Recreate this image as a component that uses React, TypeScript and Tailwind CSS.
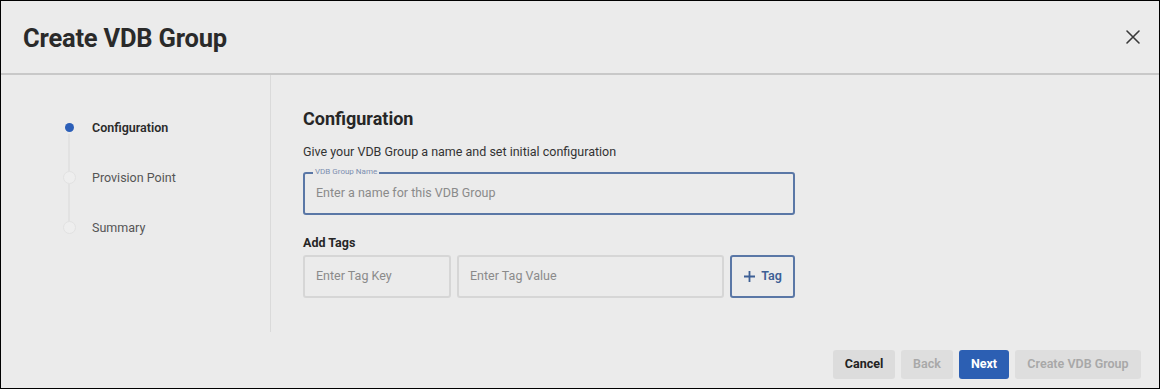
import React from "react";

function XIcon() {
  return (
    <svg width="16" height="16" viewBox="0 0 16 16" fill="none">
      <path d="M2 2L14 14M14 2L2 14" stroke="#3a3a3a" strokeWidth="1.6" strokeLinecap="round" />
    </svg>
  );
}

function Step({ label, active, last }: { label: string; active?: boolean; last?: boolean }) {
  return (
    <div className="relative flex h-[50px] items-start">
      <div className="relative flex w-[40px] justify-center">
        {active ? (
          <div className="mt-[3px] h-[9px] w-[9px] rounded-full bg-[#2c5fb8]" />
        ) : (
          <div className="mt-[1px] h-[13px] w-[13px] rounded-full border border-[#e2e2e2] bg-[#eeeeee]" />
        )}
        {!last && <div className="absolute left-1/2 top-[14px] h-[38px] w-px -translate-x-1/2 bg-[#dadada]" />}
      </div>
      <span
        className={
          "ml-[3px] text-[12.5px] leading-[15px] " +
          (active ? "font-semibold text-[#2a2a2a]" : "text-[#555555]")
        }
      >
        {label}
      </span>
    </div>
  );
}

export default function App() {
  return (
    <div className="flex h-[389px] w-[1160px] flex-col border border-black bg-[#ebebeb] font-['Roboto',sans-serif]">
      <div className="flex h-[74px] items-center justify-between border-b-2 border-[#c8c8c8] pl-[22px] pr-[18px]">
        <h1 className="pt-[2px] text-[25.5px] font-bold tracking-[-0.2px] text-[#2a2a2a]">Create VDB Group</h1>
        <XIcon />
      </div>
      <div className="flex h-[257px]">
        <div className="w-[270px] border-r border-[#dadada] pl-[48px] pt-[45px]">
          <Step label="Configuration" active />
          <Step label="Provision Point" />
          <Step label="Summary" last />
        </div>
        <div className="flex-1 pl-[32px] pt-[33px]">
          <h2 className="text-[18px] font-bold leading-[22px] text-[#262626]">Configuration</h2>
          <p className="mt-[14px] text-[12.5px] leading-[15px] text-[#333333]">
            Give your VDB Group a name and set initial configuration
          </p>
          <div className="relative mt-[13px] flex h-[43px] w-[492px] items-center rounded-[3px] border-2 border-[#5a77a6] pl-[11px]">
            <span className="absolute -top-[7px] left-[8px] bg-[#ebebeb] px-[2px] text-[8px] leading-[10px] text-[#7d8fb0]">
              VDB Group Name
            </span>
            <span className="text-[12.5px] text-[#8a8a8a]">Enter a name for this VDB Group</span>
          </div>
          <div className="mt-[20px] text-[12.5px] font-bold leading-[15px] text-[#262626]">Add Tags</div>
          <div className="mt-[5px] flex gap-[6px]">
            <div className="flex h-[43px] w-[148px] items-center rounded-[3px] border-2 border-[#d6d6d6] pl-[11px] text-[12.5px] text-[#8a8a8a]">
              Enter Tag Key
            </div>
            <div className="flex h-[43px] w-[267px] items-center rounded-[3px] border-2 border-[#d6d6d6] pl-[11px] text-[12.5px] text-[#8a8a8a]">
              Enter Tag Value
            </div>
            <div className="flex h-[43px] w-[65px] items-center justify-center gap-[5px] rounded-[3px] border-2 border-[#5a77a6] text-[12.5px] font-semibold text-[#3d5f95]">
              <svg width="13" height="13" viewBox="0 0 13 13">
                <path d="M6.5 1V12M1 6.5H12" stroke="#3d5f95" strokeWidth="1.8" />
              </svg>
              Tag
            </div>
          </div>
        </div>
      </div>
      <div className="flex flex-1 items-start justify-end gap-[6px] pr-[18px] pt-[18px]">
        <button className="h-[29px] w-[62px] rounded-[3px] bg-[#dcdcdc] text-[12.5px] font-bold text-[#222222]">Cancel</button>
        <button className="h-[29px] w-[52px] rounded-[3px] bg-[#dedede] text-[12.5px] font-semibold text-[#a8a8a8]">Back</button>
        <button className="h-[29px] w-[50px] rounded-[3px] bg-[#2c5fb3] text-[12.5px] font-bold text-white">Next</button>
        <button className="h-[29px] w-[126px] rounded-[3px] bg-[#dedede] text-[12.5px] font-semibold text-[#a8a8a8]">Create VDB Group</button>
      </div>
    </div>
  );
}
